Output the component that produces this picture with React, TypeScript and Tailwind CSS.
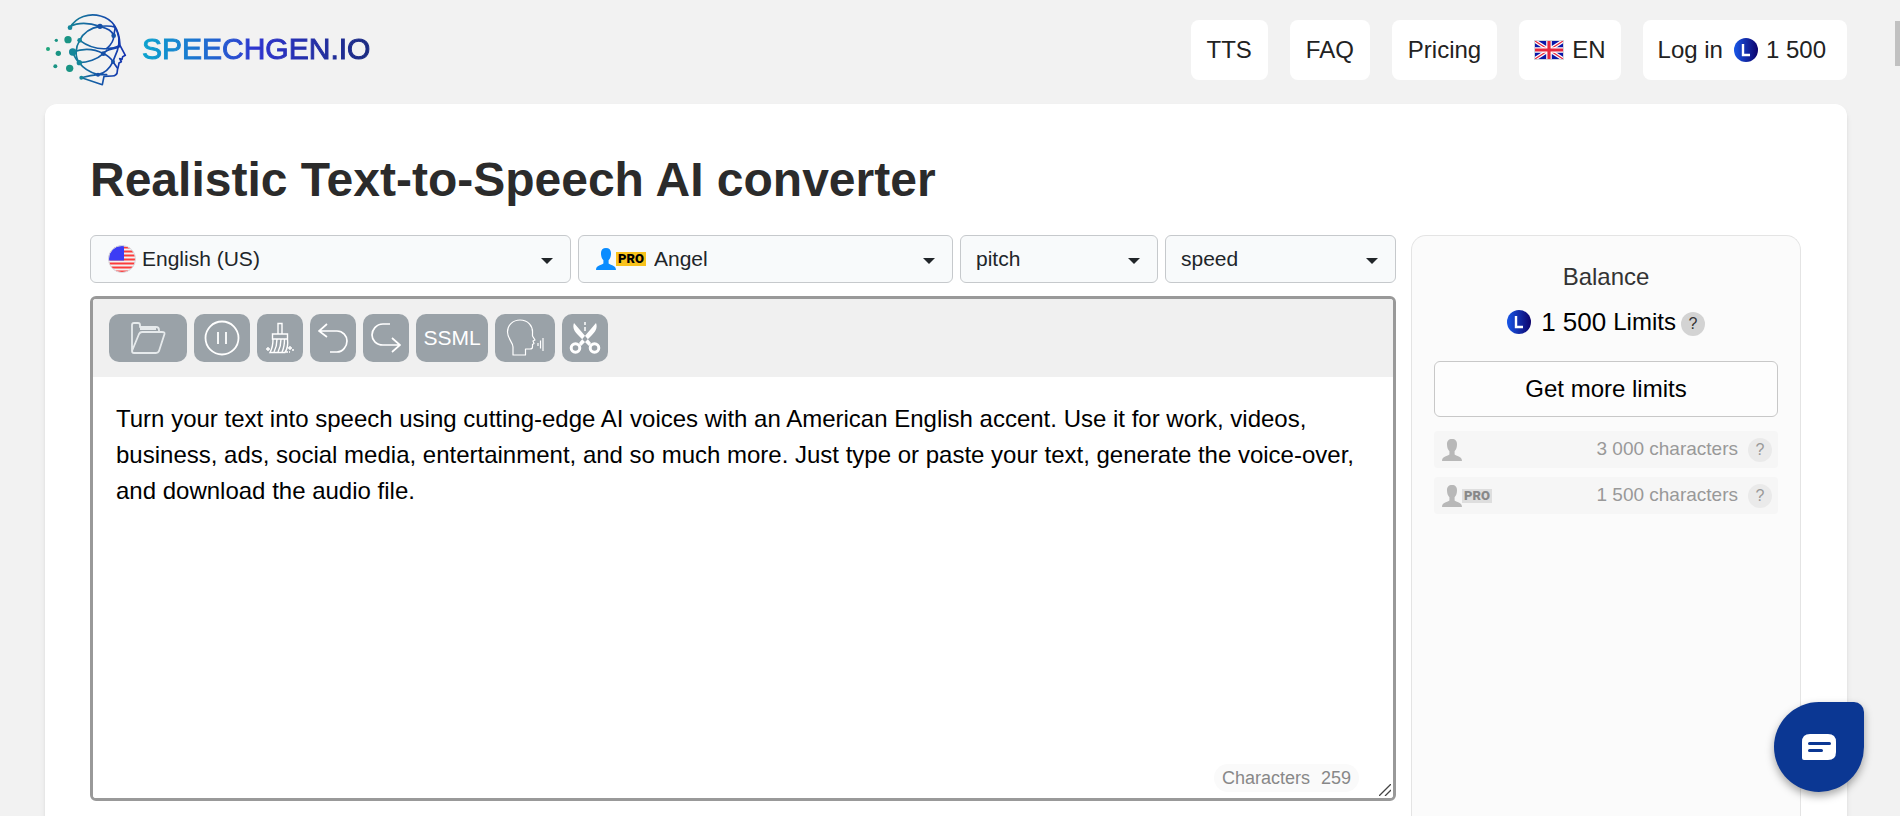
import type { ReactNode } from "react";

const editorText =
  "Turn your text into speech using cutting-edge AI voices with an American English accent. Use it for work, videos, business, ads, social media, entertainment, and so much more. Just type or paste your text, generate the voice-over, and download the audio file.";

const LogoMark = () => (
  <svg viewBox="45 30 255 240" className="h-20 w-[85px]" fill="none" aria-hidden="true">
    <defs>
      <linearGradient id="mark" x1="110" y1="0" x2="290" y2="0" gradientUnits="userSpaceOnUse">
        <stop offset="0" stopColor="#158593" />
        <stop offset="0.55" stopColor="#1557a8" />
        <stop offset="1" stopColor="#142fb0" />
      </linearGradient>
    </defs>
    <g stroke="url(#mark)" strokeWidth="5" strokeLinejoin="round" strokeLinecap="round">
      <path d="M120 83C138 50 178 38 212 48C250 58 268 88 270 136L286 166L278 170L276 178L269 176L274 185L267 189C266 200 262 207 262 213C262 224 256 228 246 228L222 229L217 254L155 233" />
      <path d="M120 80C146 66 182 70 210 79C234 86 246 92 251 107L256 82C240 76 222 78 210 79C180 84 160 98 149 121C136 142 134 170 148 188C162 208 184 218 204 224C176 226 160 232 155 233" />
      <path d="M252 77C268 100 272 122 262 152C254 172 250 180 249 185L262 204" />
      <path d="M149 121C172 138 204 148 230 146C246 132 252 122 251 107" />
      <path d="M230 146C244 146 258 142 269 137" />
      <path d="M128 156C162 144 196 148 220 161C234 166 242 174 249 185C238 208 224 220 204 224H230" />
      <path d="M148 188C172 188 202 178 220 161C232 144 250 150 268 140" />
      <path d="M128 156C134 172 138 180 148 188" />
    </g>
    <g fill="#15869a">
      <circle cx="120" cy="83" r="7" />
      <circle cx="149" cy="121" r="7" />
      <circle cx="128" cy="156" r="11" />
      <circle cx="148" cy="188" r="8" />
      <circle cx="154" cy="233" r="6" />
    </g>
    <g fill="#1a9484">
      <circle cx="114" cy="119" r="11" />
      <circle cx="119" cy="205" r="11" />
      <circle cx="85" cy="160" r="8" />
      <circle cx="79" cy="121" r="5" />
      <circle cx="76" cy="199" r="6" />
      <circle cx="54" cy="147" r="6" fill="#1fa67c" />
    </g>
    <g fill="#1650a6">
      <circle cx="210" cy="79" r="8" />
      <circle cx="251" cy="107" r="7" />
      <circle cx="220" cy="161" r="7" />
      <circle cx="249" cy="185" r="6" />
      <circle cx="204" cy="224" r="6" />
    </g>
  </svg>
);

const UkFlag = () => (
  <svg viewBox="0 0 30 20" className="h-5 w-[30px] border border-gray-300" preserveAspectRatio="none" aria-hidden="true">
    <path d="M0 0H30V20H0Z" fill="#0a17a7" />
    <path d="M0 0L30 20M30 0L0 20" stroke="#fff" strokeWidth="4" />
    <path d="M0 0L30 20M30 0L0 20" stroke="#e6273e" strokeWidth="1.3" />
    <path d="M15 0V20M0 10H30" stroke="#fff" strokeWidth="6" />
    <path d="M15 0V20M0 10H30" stroke="#e6273e" strokeWidth="3.4" />
  </svg>
);

const UsFlag = () => (
  <svg viewBox="0 0 28 28" className="size-7" aria-hidden="true">
    <clipPath id="us">
      <circle cx="14" cy="14" r="13.5" />
    </clipPath>
    <g clipPath="url(#us)">
      <path d="M0 0H28V28H0Z" fill="#f2f2f2" />
      <path d="M0 2.5H28M0 6.5H28M0 10.5H28M0 14.5H28M0 18.5H28M0 22.5H28M0 26.5H28" stroke="#fb3b3b" strokeWidth="2.2" />
      <path d="M0 0H16V15.5H0Z" fill="#3c3cf5" />
    </g>
    <circle cx="14" cy="14" r="13.5" fill="none" stroke="#d9dbe0" />
  </svg>
);

const LimitCoin = () => (
  <svg viewBox="0 0 24 24" className="size-6 shrink-0" aria-hidden="true">
    <defs>
      <linearGradient id="coin">
        <stop offset="0" stopColor="#1857e8" />
        <stop offset="1" stopColor="#0d026b" />
      </linearGradient>
    </defs>
    <circle cx="12" cy="12" r="12" fill="url(#coin)" />
    <path d="M9 6V17H16" fill="none" stroke="#fff" strokeWidth="2.4" />
  </svg>
);

const Person = () => (
  <svg viewBox="0 0 20 22" className="h-[22px] w-5" fill="currentColor" aria-hidden="true">
    <path d="M10 0C13.300 0 15.200 2 15 5.500C15 8 14.300 10.500 12.600 12.200V15.500C14 17 20 17 20 22H0C0 17 6 17 7.400 15.500V12.200C5.700 10.500 5 8 5 5.500C4.800 2 6.700 0 10 0Z" />
  </svg>
);

const ProBadge = ({ className }: { className: string }) => (
  <span className={`px-0.5 font-[Roboto,sans-serif] text-[13px] leading-[14px] font-black ${className}`}>PRO</span>
);

type PickerProps = {
  label: string;
  value: string;
  icon?: ReactNode;
  indent?: string;
};

const Picker = ({ label, value, icon, indent = "pl-[15px]" }: PickerProps) => (
  <div className="relative">
    <select
      aria-label={label}
      className={`h-12 w-full appearance-none rounded-md border border-[#c6c9cc] bg-[#f8fafb] pr-10 text-[21px] text-[#212529] ${indent}`}
    >
      <option>{value}</option>
    </select>
    {icon && (
      <span className="pointer-events-none absolute inset-y-0 left-[18px] flex items-center">{icon}</span>
    )}
    <span className="pointer-events-none absolute inset-y-0 right-[18px] flex items-center">
      <svg viewBox="0 0 12 6" className="mt-1 h-1.5 w-3" aria-hidden="true">
        <path d="M0 0H12L6 6Z" fill="#212529" />
      </svg>
    </span>
  </div>
);

const ToolButton = ({ label, width, children }: { label: string; width: string; children: ReactNode }) => (
  <button
    type="button"
    aria-label={label}
    className={`flex h-12 shrink-0 items-center justify-center rounded-[10px] bg-[#9aa2a8] text-white ${width}`}
  >
    {children}
  </button>
);

const Help = ({ className = "bg-[#d3d3d3] text-[#333]" }: { className?: string }) => (
  <button type="button" aria-label="Help" className={`size-6 shrink-0 rounded-full text-base leading-6 ${className}`}>
    ?
  </button>
);

const navLink = "flex h-[60px] items-center rounded-lg bg-white";

const Header = () => (
  <header className="flex h-[104px] items-center justify-between pb-1">
    <a href="#" className="flex items-center gap-3">
      <LogoMark />
      <span className="bg-linear-to-r from-[#0ba3cd] via-[#2e33cf] to-[#1a2a80] bg-clip-text pb-1 text-[30px] text-transparent [-webkit-text-stroke:1px_transparent]">
        SPEECHGEN.IO
      </span>
    </a>
    <nav className="flex gap-[22px]">
      <a href="#" className={`${navLink} px-4`}>TTS</a>
      <a href="#" className={`${navLink} px-4`}>FAQ</a>
      <a href="#" className={`${navLink} px-4`}>Pricing</a>
      <a href="#" className={`${navLink} gap-2 px-[15px]`}>
        <UkFlag />
        EN
      </a>
      <a href="#" className={`${navLink} pr-[21px] pl-[15px]`}>
        Log in
        <span className="ml-[11px] flex items-center gap-2">
          <LimitCoin />
          1 500
        </span>
      </a>
    </nav>
  </header>
);

const Toolbar = () => (
  <div className="flex h-[78px] items-center gap-[7px] bg-[#f0f0f0] px-4">
    <ToolButton label="Open file" width="w-[78px]">
      <svg viewBox="0 0 36 32" className="h-8 w-9" fill="none" stroke="#e6eaec" strokeWidth="1.8" strokeLinejoin="round">
        <path d="M2 29V3Q2 1 4 1H8Q10 1 10 3V5H26Q29 5 29 8V10M2 29L9 12Q10 10 12 10H32Q35 10 34.500 12L29 29Q28 31 26 31H4Q2 31 2 29" />
        <path d="M10 7H26" />
      </svg>
    </ToolButton>
    <ToolButton label="Insert pause" width="w-[56px]">
      <svg viewBox="0 0 36 36" className="size-9" fill="none" stroke="currentColor" strokeWidth="1.8">
        <circle cx="18" cy="18" r="16.500" />
        <path d="M14 12V24M22 12V24" />
      </svg>
    </ToolButton>
    <ToolButton label="Clear text" width="w-[46px]">
      <svg viewBox="0 0 28 32" className="h-8 w-7" fill="none" stroke="currentColor" strokeWidth="1.4">
        <path d="M12 12V1.500H16V12M6.500 12H21.500V17H6.500ZM7 17C7 23 6 27 4 30.500H19C22 26 22 21 21.500 17" />
        <path d="M11 17C11 22 10 26 8 30M15 17C15 22 14 26 12 30M18.500 17C18.500 22 18 26 16 30" />
        <path d="M2 25V29M0 27H4M24 24V28M22 26H26M20 30H22M26 28H28M23 30H24" />
      </svg>
    </ToolButton>
    <ToolButton label="Undo" width="w-[46px]">
      <svg viewBox="0 0 30 30" className="size-[30px]" fill="none" stroke="currentColor" strokeWidth="1.7">
        <path d="M9 1L1 8L9 14M1 8H19C25 8 29 13 29 18S25 29 19 29H12" />
      </svg>
    </ToolButton>
    <ToolButton label="Redo" width="w-[46px]">
      <svg viewBox="0 0 30 30" className="size-[30px]" fill="none" stroke="currentColor" strokeWidth="1.7">
        <path d="M21 29L29 22L21 15M29 22H12C5 22 1 17 1 12S5 1 12 1H19" />
      </svg>
    </ToolButton>
    <ToolButton label="SSML" width="w-[72px]">
      <span className="text-[21px]">SSML</span>
    </ToolButton>
    <ToolButton label="Dialogue" width="w-[60px]">
      <svg viewBox="0 0 38 38" className="size-[38px]" fill="none" stroke="currentColor" strokeWidth="1.2" strokeLinejoin="round">
        <path d="M7 36V28C7 23 1.500 20 1.500 13C1.500 6 7 1 14 1C22 1 27 7 26.500 14V17L29 21L27 22L28 24.500L26.500 25.500V28Q26.500 30 24 30H19.500V36Z" />
        <path d="M32 24V27M34.500 21.500V29.500M37 19V32" />
      </svg>
    </ToolButton>
    <ToolButton label="Cut" width="w-[46px]">
      <svg viewBox="0 0 32 32" className="size-8" aria-hidden="true">
        <path d="M5 1C3 6 6 10 9 13L20 24L22 21L17 15ZM27 1C29 6 26 10 23 13L12 24L10 21L15 15Z" fill="currentColor" />
        <g fill="none" stroke="currentColor" strokeWidth="3">
          <circle cx="6.500" cy="26" r="4.300" />
          <circle cx="25.500" cy="26" r="4.300" />
        </g>
        <path d="M16 0V3M16 5V9" stroke="currentColor" strokeWidth="1.500" />
      </svg>
    </ToolButton>
  </div>
);

const Editor = () => (
  <div className="relative mt-[13px] overflow-hidden rounded-md border-[3px] border-[#999]">
    <Toolbar />
    <textarea
      aria-label="Text to convert"
      className="block h-[421px] w-full resize-none bg-white px-[23px] py-6 text-[24px] leading-9 text-black outline-none"
      defaultValue={editorText}
    />
    <p className="absolute right-[34px] bottom-1.5 flex gap-[11px] rounded-full bg-[#fafafa] px-2 text-[18px] leading-7 text-[#888]">
      <span>Characters</span>
      <span>259</span>
    </p>
    <svg viewBox="0 0 12 12" className="absolute right-0.5 bottom-0.5 size-3" stroke="#444" strokeWidth="1.300" aria-hidden="true">
      <path d="M0 12L12 0M6 12L12 6" />
    </svg>
  </div>
);

const QuotaRow = ({ amount, pro }: { amount: string; pro?: boolean }) => (
  <li className="flex h-[37px] items-center rounded bg-[#f6f6f6] pr-1.5 pl-2 text-[19px] text-[#999]">
    <span className="text-[#b8b8b8]">
      <Person />
    </span>
    {pro && <ProBadge className="bg-[#dedede] text-[#888]" />}
    <span className="mr-2.5 ml-auto">{amount} characters</span>
    <Help className="bg-[#eaeaea] text-[#999]" />
  </li>
);

const Balance = () => (
  <aside className="w-[390px] shrink-0 rounded-t-[15px] border border-b-0 border-[#e4e4e4] bg-[#fbfbfb] px-[22px] pt-[23px] text-center">
    <h2 className="leading-9 text-[#333]">Balance</h2>
    <p className="mt-[9px] flex h-9 items-center justify-center text-black">
      <LimitCoin />
      <span className="mr-[7px] ml-2.5 text-[26px]">1 500</span>
      Limits
      <span className="mt-1 ml-[5px] flex">
        <Help />
      </span>
    </p>
    <button type="button" className="mt-[21px] h-14 w-full rounded-md border border-[#c8c8c8] bg-[#fdfdfd] text-black">
      Get more limits
    </button>
    <ul className="mt-[14px] flex flex-col gap-[9px]">
      <QuotaRow amount="3 000" />
      <QuotaRow amount="1 500" pro />
    </ul>
  </aside>
);

export default function App() {
  return (
    <div className="h-screen overflow-hidden bg-[#f2f2f2] pr-[53px] pl-[45px] font-['Liberation_Sans',Arial,sans-serif] text-[24px] text-[#222]">
      <Header />
      <main className="min-h-screen rounded-xl bg-white pt-12 pr-[46px] pl-[45px] shadow-md">
        <h1 className="text-[48px] leading-[56px] font-bold text-[#2b2b2b]">
          Realistic Text-to-Speech AI converter
        </h1>
        <div className="mt-[27px] flex items-stretch gap-[15px]">
          <div className="min-w-0 flex-1">
            <div className="grid grid-cols-[481fr_375fr_198fr_231fr] gap-[7px]">
              <Picker label="Language" value="English (US)" icon={<UsFlag />} indent="pl-[51px]" />
              <Picker
                label="Voice"
                value="Angel"
                indent="pl-[75px]"
                icon={
                  <span className="flex items-center text-[#0a8cff]">
                    <Person />
                    <ProBadge className="bg-[#f8c21c] text-black" />
                  </span>
                }
              />
              <Picker label="Pitch" value="pitch" />
              <Picker label="Speed" value="speed" />
            </div>
            <Editor />
            <div className="h-20" />
          </div>
          <Balance />
        </div>
      </main>

      <button
        type="button"
        aria-label="Open chat"
        className="fixed right-9 bottom-6 flex size-[90px] items-center justify-center rounded-[45px] rounded-tr-[10px] bg-[#0b3793] shadow-[0_4px_8px_rgba(0,0,0,0.35)]"
      >
        <svg viewBox="0 0 34 26" className="h-[26px] w-[34px]" aria-hidden="true">
          <path d="M8 0H26Q34 0 34 8V18Q34 26 26 26H2Q0 26 0 24V8Q0 0 8 0Z" fill="#fff" />
          <path d="M7.500 9.500H27.500M7.500 16.500H19.500" stroke="#0b3793" strokeWidth="3" strokeLinecap="round" />
        </svg>
      </button>
      <div className="fixed top-[21px] right-0 h-[45px] w-[5px] bg-[#c1c1c1]" />
    </div>
  );
}
